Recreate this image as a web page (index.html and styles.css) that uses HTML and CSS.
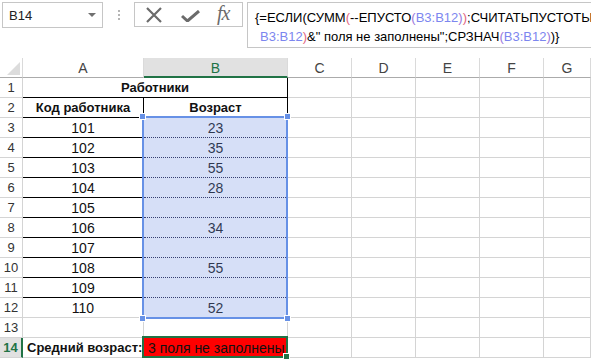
FILE: index.html
```html
<!DOCTYPE html>
<html>
<head>
    <meta charset="UTF-8">
    <title>Работники</title>
    <link rel="stylesheet" href="styles.css">
</head>
<body>
<div class="app">
    <!-- строка формул -->
    <div class="formula-row">
        <div class="name-box">
            <span>B14</span>
            <span class="arrow"></span>
        </div>
        <div class="grip"><i></i><i></i><i></i></div>
        <div class="fx-buttons">
            <svg width="18" height="16" viewBox="0 0 18 16"><path d="M2 1 L16 15 M16 1 L2 15" stroke="#6b6b6b" stroke-width="2.2" fill="none"/></svg>
            <svg width="19" height="12" viewBox="0 0 19 12"><path d="M1 6 L6.5 11 L18 1" stroke="#6b6b6b" stroke-width="3" fill="none"/></svg>
            <span class="fx">fx</span>
        </div>
        <div class="formula-box">
            <div class="fline">{=ЕСЛИ(СУММ<span class="p2">(</span>--ЕПУСТО<span class="p3">(</span><span class="ref">B3:B12</span><span class="p3">)</span><span class="p2">)</span>;СЧИТАТЬПУСТОТЫ<span class="p2">(</span></div>
            <div class="fline second"><span class="ref">B3:B12</span><span class="p2">)</span>&amp;" поля не заполнены";СРЗНАЧ<span class="p3">(</span><span class="ref">B3:B12</span><span class="p3">)</span>)}</div>
        </div>
    </div>

    <!-- лист -->
    <div class="sheet">
        <div class="grid">
            <div class="ch corner"><span class="tri"></span></div>
            <div class="ch">A</div>
            <div class="ch ch-sel">B</div>
            <div class="ch">C</div>
            <div class="ch">D</div>
            <div class="ch">E</div>
            <div class="ch">F</div>
            <div class="ch">G</div>

            <div class="rh">1</div>
            <div class="c title bb br">Работники</div>
            <div class="c"></div><div class="c"></div><div class="c"></div><div class="c"></div><div class="c"></div>

            <div class="rh">2</div>
            <div class="c bold bb br">Код работника</div>
            <div class="c bold bb br">Возраст</div>
            <div class="c"></div><div class="c"></div><div class="c"></div><div class="c"></div><div class="c"></div>

            <div class="rh">3</div>
            <div class="c bb br">101</div>
            <div class="c bd br">23</div>
            <div class="c"></div><div class="c"></div><div class="c"></div><div class="c"></div><div class="c"></div>

            <div class="rh">4</div>
            <div class="c bb br">102</div>
            <div class="c bd br">35</div>
            <div class="c"></div><div class="c"></div><div class="c"></div><div class="c"></div><div class="c"></div>

            <div class="rh">5</div>
            <div class="c bb br">103</div>
            <div class="c bd br">55</div>
            <div class="c"></div><div class="c"></div><div class="c"></div><div class="c"></div><div class="c"></div>

            <div class="rh">6</div>
            <div class="c bb br">104</div>
            <div class="c bd br">28</div>
            <div class="c"></div><div class="c"></div><div class="c"></div><div class="c"></div><div class="c"></div>

            <div class="rh">7</div>
            <div class="c bb br">105</div>
            <div class="c bd br"></div>
            <div class="c"></div><div class="c"></div><div class="c"></div><div class="c"></div><div class="c"></div>

            <div class="rh">8</div>
            <div class="c bb br">106</div>
            <div class="c bd br">34</div>
            <div class="c"></div><div class="c"></div><div class="c"></div><div class="c"></div><div class="c"></div>

            <div class="rh">9</div>
            <div class="c bb br">107</div>
            <div class="c bd br"></div>
            <div class="c"></div><div class="c"></div><div class="c"></div><div class="c"></div><div class="c"></div>

            <div class="rh">10</div>
            <div class="c bb br">108</div>
            <div class="c bd br">55</div>
            <div class="c"></div><div class="c"></div><div class="c"></div><div class="c"></div><div class="c"></div>

            <div class="rh">11</div>
            <div class="c bb br">109</div>
            <div class="c bd br"></div>
            <div class="c"></div><div class="c"></div><div class="c"></div><div class="c"></div><div class="c"></div>

            <div class="rh">12</div>
            <div class="c br">110</div>
            <div class="c br">52</div>
            <div class="c"></div><div class="c"></div><div class="c"></div><div class="c"></div><div class="c"></div>

            <div class="rh">13</div>
            <div class="c"></div>
            <div class="c"></div>
            <div class="c"></div><div class="c"></div><div class="c"></div><div class="c"></div><div class="c"></div>

            <div class="rh rh-sel">14</div>
            <div class="c bold left">Средний возраст:</div>
            <div class="c red left">3 поля не заполнены</div>
            <div class="c"></div><div class="c"></div><div class="c"></div><div class="c"></div><div class="c"></div>
        </div>

        <!-- выделение диапазона B3:B12 -->
        <div class="ref-range">
            <span class="knob k1"></span><span class="knob k2"></span>
            <span class="knob k3"></span><span class="knob k4"></span>
        </div>
        <!-- активная ячейка B14 -->
        <div class="active-cell"><span class="fill-handle"></span></div>
    </div>
</div>
</body>
</html>
```

FILE: styles.css
```css
html, body {
    margin: 0;
    padding: 0;
    background: #ffffff;
    overflow: hidden;
}

.app {
    width: 591px;
    height: 360px;
    font-family: "Liberation Sans", Arial, sans-serif;
    color: #000;
}

/* строка формул */
.formula-row {
    display: flex;
    align-items: flex-start;
    height: 58px;
    padding-top: 2px;
    box-sizing: border-box;
}

.name-box {
    margin-left: 2px;
    width: 101px;
    height: 26px;
    border: 1px solid #c6c6c6;
    box-sizing: border-box;
    display: flex;
    align-items: center;
    justify-content: space-between;
    padding: 0 6px 0 6px;
    font-size: 13px;
    color: #222;
}

.arrow {
    width: 0;
    height: 0;
    border-left: 4px solid transparent;
    border-right: 4px solid transparent;
    border-top: 4px solid #707070;
}

.grip {
    width: 31px;
    height: 25px;
    display: flex;
    flex-direction: column;
    align-items: center;
    justify-content: center;
    gap: 2px;
}
.grip i {
    display: block;
    width: 2px;
    height: 2px;
    background: #b5b5b5;
}

.fx-buttons {
    width: 109px;
    height: 25px;
    border: 1px solid #c6c6c6;
    box-sizing: border-box;
    display: flex;
    align-items: center;
    gap: 0;
    padding-left: 10px;
}
.fx-buttons svg:first-child {
    margin-right: 18px;
}
.fx-buttons svg:nth-child(2) {
    margin-right: 17px;
    margin-top: 2px;
}
.fx {
    font-family: "Liberation Serif", "Times New Roman", serif;
    font-style: italic;
    font-size: 20px;
    color: #6b6b6b;
    letter-spacing: -1px;
    margin-top: -2px;
}

.formula-box {
    margin-left: 4px;
    flex: 1;
    height: 46px;
    border: 1px solid #c6c6c6;
    border-right: none;
    box-sizing: border-box;
    padding: 5px 0 0 7px;
    overflow: hidden;
    font-size: 13px;
    line-height: 19px;
}
.fline {
    white-space: nowrap;
}
.fline.second {
    padding-left: 5px;
}
.ref { color: #7c86ef; }
.p2  { color: #e2657f; }
.p3  { color: #9b77db; }

/* лист */
.sheet {
    position: relative;
}

.grid {
    display: grid;
    grid-template-columns: 23px 121px 144px 64px 64px 64px 64px 1fr;
    grid-auto-rows: 20px;
}

.grid > div {
    box-sizing: border-box;
    border-right: 1px solid #d4d4d4;
    border-bottom: 1px solid #d4d4d4;
    font-size: 14px;
    line-height: 20px;
    white-space: nowrap;
}

.ch {
    text-align: center;
    color: #444;
    border-bottom: 1px solid #ababab !important;
    border-right: 1px solid #dadada !important;
}
.ch-sel {
    background: #e1e1e1;
    color: #217346;
    border-bottom: 2px solid #217346 !important;
}
.corner {
    display: flex;
    align-items: flex-end;
    justify-content: flex-end;
    padding: 0 2px 2px 0;
}
.tri {
    width: 0;
    height: 0;
    border-left: 13px solid transparent;
    border-bottom: 13px solid #dcdcdc;
}

.rh {
    text-align: center;
    color: #333;
    font-size: 13px !important;
}
.rh-sel {
    background: #e1e1e1;
    color: #217346;
    font-weight: bold;
    border-right: 2px solid #217346 !important;
}

.c {
    text-align: center;
    color: #111;
}
.title {
    grid-column: span 2;
    font-weight: bold;
    font-size: 13px !important;
}
.bold {
    font-weight: bold;
    font-size: 13px !important;
}
.left {
    text-align: left;
    padding-left: 4px;
}
.red {
    background: #ff0000;
    overflow: visible;
}

.bb { border-bottom: 1px solid #000 !important; }
.br { border-right: 1px solid #000 !important; }
.bd { border-bottom: 1px dotted #1a1a40 !important; }

/* диапазон из формулы */
.ref-range {
    position: absolute;
    left: 142px;
    top: 58px;
    width: 146px;
    height: 203px;
    box-sizing: border-box;
    border: 2px solid #6791e6;
    background: rgba(120, 150, 230, 0.3);
}
.knob {
    position: absolute;
    width: 5px;
    height: 5px;
    background: #6791e6;
    border: 1px solid #fff;
}
.k1 { left: -5px; top: -5px; }
.k2 { right: -5px; top: -5px; }
.k3 { left: -5px; bottom: -5px; }
.k4 { right: -5px; bottom: -5px; }

.active-cell {
    position: absolute;
    left: 142px;
    top: 278px;
    width: 146px;
    height: 22px;
    box-sizing: border-box;
    border: 2px solid #217346;
}
.fill-handle {
    position: absolute;
    right: -4px;
    bottom: -4px;
    width: 5px;
    height: 5px;
    background: #217346;
    border: 1px solid #fff;
}
```
